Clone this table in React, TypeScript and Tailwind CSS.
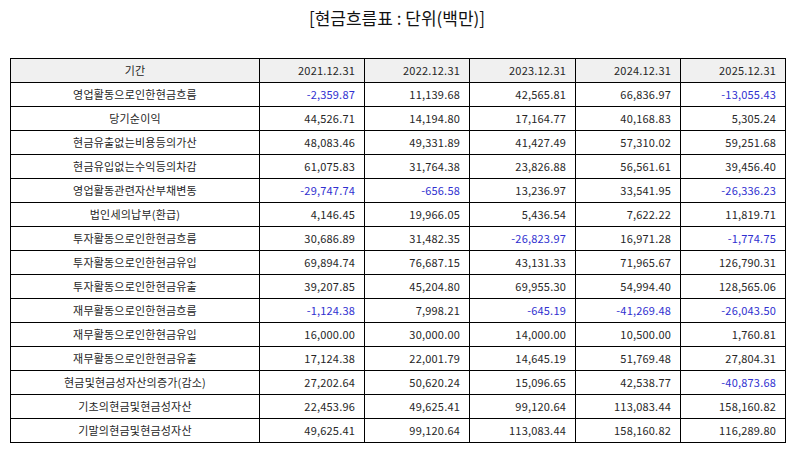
const YEARS = ["2021.12.31", "2022.12.31", "2023.12.31", "2024.12.31", "2025.12.31"];

const ROWS: [string, string[]][] = [
  ["영업활동으로인한현금흐름", ["-2,359.87", "11,139.68", "42,565.81", "66,836.97", "-13,055.43"]],
  ["당기순이익", ["44,526.71", "14,194.80", "17,164.77", "40,168.83", "5,305.24"]],
  ["현금유출없는비용등의가산", ["48,083.46", "49,331.89", "41,427.49", "57,310.02", "59,251.68"]],
  ["현금유입없는수익등의차감", ["61,075.83", "31,764.38", "23,826.88", "56,561.61", "39,456.40"]],
  ["영업활동관련자산부채변동", ["-29,747.74", "-656.58", "13,236.97", "33,541.95", "-26,336.23"]],
  ["법인세의납부(환급)", ["4,146.45", "19,966.05", "5,436.54", "7,622.22", "11,819.71"]],
  ["투자활동으로인한현금흐름", ["30,686.89", "31,482.35", "-26,823.97", "16,971.28", "-1,774.75"]],
  ["투자활동으로인한현금유입", ["69,894.74", "76,687.15", "43,131.33", "71,965.67", "126,790.31"]],
  ["투자활동으로인한현금유출", ["39,207.85", "45,204.80", "69,955.30", "54,994.40", "128,565.06"]],
  ["재무활동으로인한현금흐름", ["-1,124.38", "7,998.21", "-645.19", "-41,269.48", "-26,043.50"]],
  ["재무활동으로인한현금유입", ["16,000.00", "30,000.00", "14,000.00", "10,500.00", "1,760.81"]],
  ["재무활동으로인한현금유출", ["17,124.38", "22,001.79", "14,645.19", "51,769.48", "27,804.31"]],
  ["현금및현금성자산의증가(감소)", ["27,202.64", "50,620.24", "15,096.65", "42,538.77", "-40,873.68"]],
  ["기초의현금및현금성자산", ["22,453.96", "49,625.41", "99,120.64", "113,083.44", "158,160.82"]],
  ["기말의현금및현금성자산", ["49,625.41", "99,120.64", "113,083.44", "158,160.82", "116,289.80"]],
];

const FONT = "font-['Noto_Sans_CJK_KR','Noto_Sans',sans-serif]";
const CELL = "h-[24px] border-r border-b border-black p-0";

export default function App() {
  return (
    <div className={`h-[452px] w-[794px] bg-white text-[#262626] ${FONT}`}>
      <div className="flex h-[38px] items-center justify-center pb-[2px] text-[17px] text-[#111]">
        [현금흐름표 : 단위(백만)]
      </div>
      <div className="px-[10px] pt-[20px]">
        <table className="w-[776px] table-fixed border-separate border-spacing-0 border-l border-t border-black text-[11px] tracking-[0.2px]">
          <colgroup>
            <col className="w-[249px]" />
            <col className="w-[105px]" />
            <col className="w-[105px]" />
            <col className="w-[106px]" />
            <col className="w-[105px]" />
            <col className="w-[105px]" />
          </colgroup>
          <thead>
            <tr className="bg-[#f0f0f0]">
              <th className={`${CELL} text-center font-normal`}>기간</th>
              {YEARS.map((y) => (
                <th key={y} className={`${CELL} pr-[9px] text-right font-normal`}>
                  {y}
                </th>
              ))}
            </tr>
          </thead>
          <tbody>
            {ROWS.map(([label, vals]) => (
              <tr key={label}>
                <td className={`${CELL} text-center`}>{label}</td>
                {vals.map((v, i) => (
                  <td
                    key={i}
                    className={`${CELL} pr-[9px] text-right ${
                      v.startsWith("-") ? "text-[#3030d0]" : ""
                    }`}
                  >
                    {v}
                  </td>
                ))}
              </tr>
            ))}
          </tbody>
        </table>
      </div>
    </div>
  );
}
